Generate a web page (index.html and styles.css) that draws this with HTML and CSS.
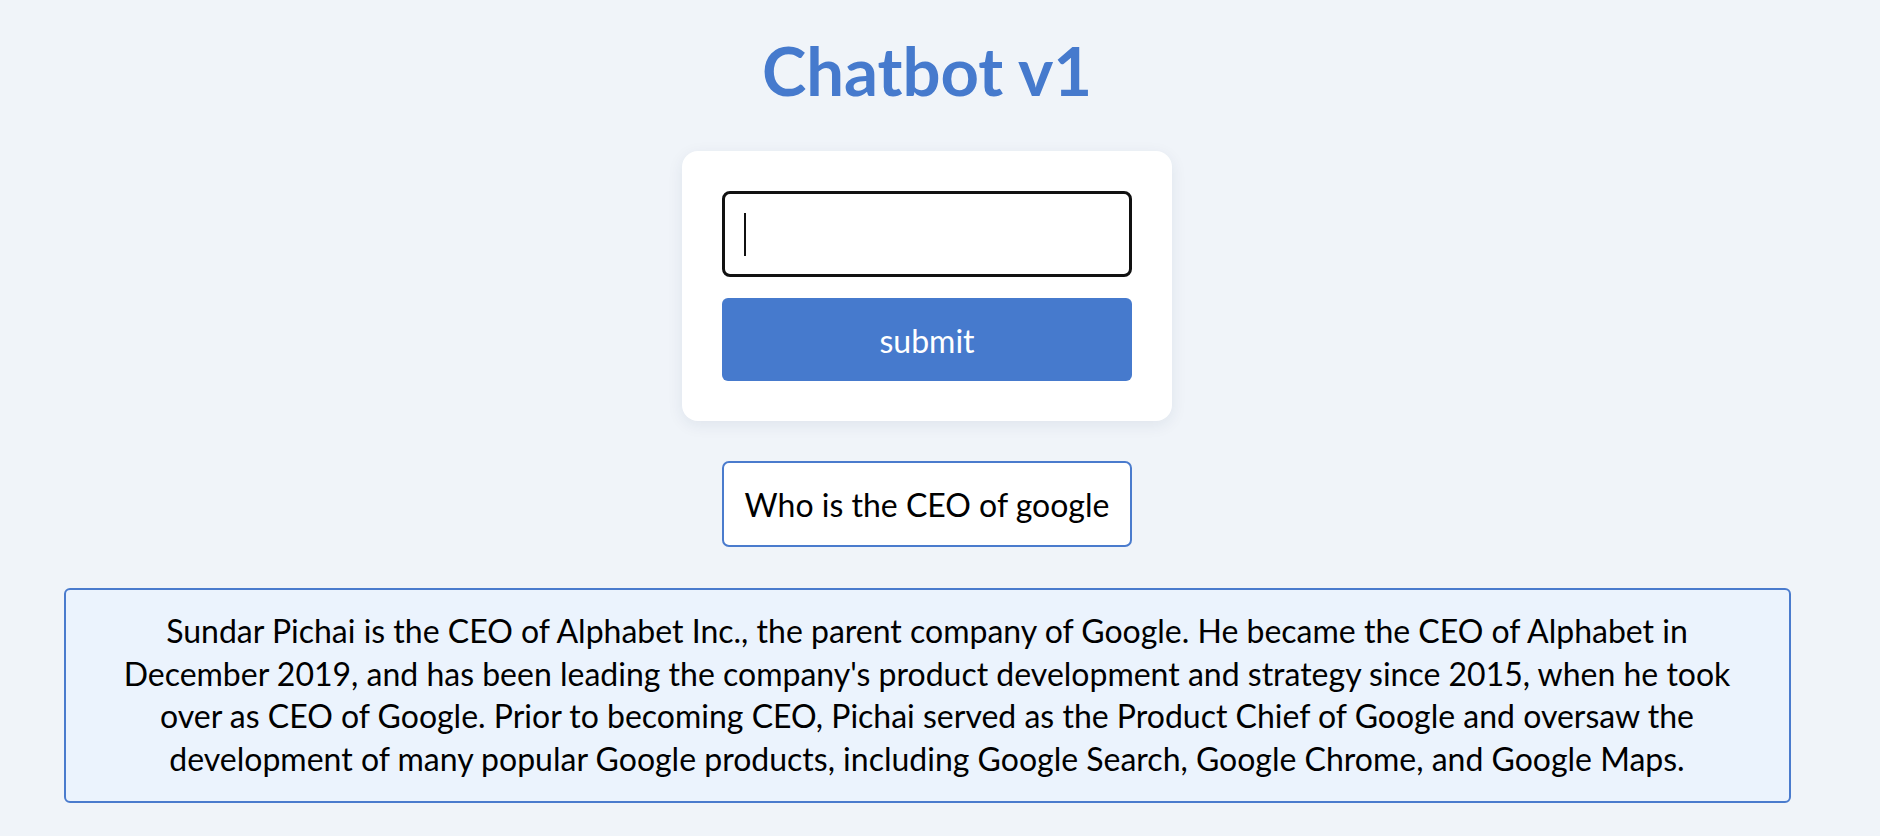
FILE: index.html
```html
<!DOCTYPE html>
<html lang="en">
<head>
<meta charset="utf-8">
<title>Chatbot v1</title>
<link rel="stylesheet" href="styles.css">
</head>
<body>
<main class="page">
  <h1 class="title">Chatbot v1</h1>
  <form class="card">
    <div class="field">
      <input class="prompt" type="text" aria-label="Question">
      <span class="caret"></span>
    </div>
    <button class="submit" type="button">submit</button>
  </form>
  <div class="question">Who is the CEO of google</div>
  <div class="answer">Sundar Pichai is the CEO of Alphabet Inc., the parent company of Google. He became the CEO of Alphabet in December 2019, and has been leading the company's product development and strategy since 2015, when he took over as CEO of Google. Prior to becoming CEO, Pichai served as the Product Chief of Google and oversaw the development of many popular Google products, including Google Search, Google Chrome, and Google Maps.</div>
</main>
</body>
</html>
```
FILE: styles.css
```css
html, body {
  margin: 0;
  padding: 0;
}
body {
  background: #f0f4f9;
  font-family: "Lato", "Open Sans", sans-serif;
  color: #000;
}
.page {
  width: calc(100% - 26px);
  display: flex;
  flex-direction: column;
  align-items: center;
  padding-top: 30px;
}
.title {
  margin: 0;
  font-size: 67px;
  line-height: 80px;
  font-weight: 700;
  color: #467acd;
}
.card {
  margin-top: 41px;
  width: 410px;
  padding: 40px;
  background: #fff;
  border-radius: 16px;
  box-shadow: 0 4px 16px rgba(30, 50, 90, 0.08);
  display: flex;
  flex-direction: column;
  gap: 21px;
}
.field {
  position: relative;
  height: 86px;
}
.prompt {
  box-sizing: border-box;
  width: 100%;
  height: 86px;
  border: 3.5px solid #111;
  border-radius: 8px;
  outline: none;
  padding: 0 20px;
  font-family: inherit;
  font-size: 32px;
  caret-color: transparent;
  background: #fff;
}
.caret {
  position: absolute;
  left: 22px;
  top: 22px;
  width: 2px;
  height: 43px;
  background: #111;
}
.submit {
  height: 83px;
  border: none;
  border-radius: 6px;
  background: #467acd;
  color: #fff;
  font-family: inherit;
  font-size: 32px;
  padding: 2px 0 0;
}
.question {
  margin-top: 40px;
  box-sizing: border-box;
  width: 410px;
  height: 86px;
  border: 2px solid #4a7bcd;
  border-radius: 7px;
  background: #fff;
  display: flex;
  align-items: center;
  justify-content: center;
  font-size: 32px;
}
.answer {
  margin-top: 41px;
  box-sizing: border-box;
  width: 1727px;
  padding: 20px 40px;
  border: 2px solid #4a7bcd;
  border-radius: 6px;
  background: #ebf3fd;
  text-align: center;
  font-size: 32px;
  line-height: 42.67px;
}
```
